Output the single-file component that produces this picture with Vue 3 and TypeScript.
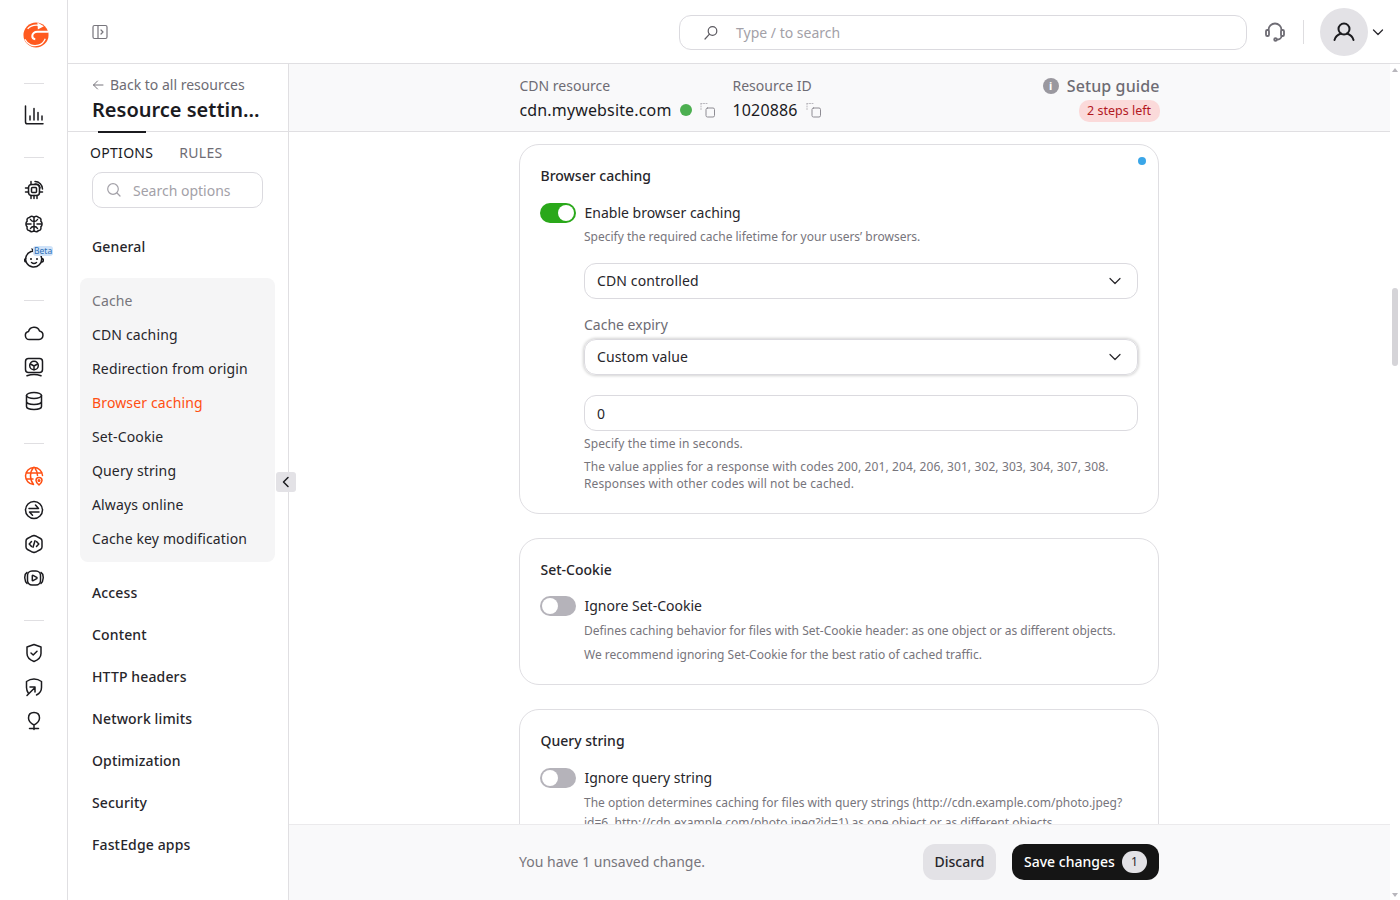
<script setup lang="ts">
const cacheItems = ['CDN caching', 'Redirection from origin', 'Browser caching', 'Set-Cookie', 'Query string', 'Always online', 'Cache key modification']
const groups = ['Access', 'Content', 'HTTP headers', 'Network limits', 'Optimization', 'Security', 'FastEdge apps']
</script>

<template>
  <div class="page">
    <aside class="rail">
      <svg class="logo" viewBox="0 0 28 28" width="26" height="26">
        <circle cx="14" cy="14" r="13.500" fill="#ff5a1f" />
        <path class="lw" d="M27.500 10.500H15.500c-3.200 0-5.500 2-5.500 4.500 0 2 1.300 3.300 3.200 3.500" />
        <path class="lw thin" d="M5 7.500C8 3.800 12 3 16.500 3.500" />
        <path class="lfill" d="M15.500 .5 22.500 4.500 16 8z" />
        <path class="lw thin" d="M2 18.500C5 24.500 11 26.500 16.500 25c3.500-1 6-3.500 7.500-7" />
      </svg>
      <div class="sep first"></div>
      <div class="rail-group single">
        <svg class="ri" viewBox="0 0 20 20"><path d="M1.500 1v16q0 1.800 1.800 1.800H19M6 15v-4M10 15V3.500M14 15V7.500M18 15v-4" /></svg>
      </div>
      <div class="sep"></div>
      <div class="rail-group">
        <svg class="ri" viewBox="0 0 20 20"><rect x="4.500" y="4.500" width="11" height="11" rx="3" /><rect x="7.500" y="7.500" width="5" height="5" rx="1" /><path d="M1.500 8h3M1.500 12h3M15.500 12h3M7 15.500v3M10 15.500v3M13 15.500v3M7 1.500v3M11 1.500a7.500 7.500 0 0 1 7.500 7.500M11 4a5 5 0 0 1 5 4" /></svg>
        <svg class="ri" viewBox="0 0 20 20"><path d="M10 3.500C9 2 6.500 1.800 5.500 3.500 3.500 3.500 2.500 5.500 3.200 7.200c-1.700 1.300-1.700 4.300 0 5.600-.7 1.700.3 3.700 2.300 3.700 1 1.700 3.500 1.500 4.500 0 1 1.500 3.500 1.700 4.500 0 2 0 3-2 2.300-3.700 1.700-1.300 1.700-4.300 0-5.600.7-1.700-.3-3.700-2.300-3.700C13.500 1.800 11 2 10 3.500zM10 3.500v13M10 7.500C8 7.500 7 6.500 6.500 5.500M10 12.500c-2 0-3 1-3.500 2M3.200 10H7M10 7.500c2 0 3-1 3.500-2M10 12.500c2 0 3 1 3.500 2M16.800 10H13" /></svg>
        <div class="beta-wrap">
          <svg class="ri" viewBox="0 0 20 20"><path d="M7 3.500a8 8 0 1 0 7 .8M2 10.500a1.800 1.800 0 0 0 0 3.500M18 10.500a1.800 1.800 0 0 1 0 3.500M7 3.500c2 .2 2.500-1.500 1-2.500" /><circle cx="7" cy="11" r="1" class="fill" /><circle cx="13" cy="11" r="1" class="fill" /><path d="M7.500 14.500q2.500 2 5 0" /></svg>
          <span class="beta">Beta</span>
        </div>
      </div>
      <div class="sep"></div>
      <div class="rail-group">
        <svg class="ri" viewBox="0 0 20 20"><path d="M5.500 16.500a4 4 0 0 1-1-7.900 5.800 5.800 0 0 1 11-.6 4.300 4.300 0 0 1-.5 8.500z" /></svg>
        <svg class="ri" viewBox="0 0 20 20"><rect x="1.500" y="1.500" width="17" height="14" rx="3" /><circle cx="10" cy="8.500" r="4.300" /><path d="M6.500 7 10 9l3.500-2M10 9v3.800M3 18.800q7-2.600 14 0" /></svg>
        <svg class="ri" viewBox="0 0 20 20"><ellipse cx="10" cy="4.500" rx="7.500" ry="3" /><path d="M2.500 4.500v11c0 1.700 3.400 3 7.500 3s7.500-1.300 7.500-3v-11M2.500 10.500c0 1.700 3.400 3 7.500 3s7.500-1.300 7.500-3" /></svg>
      </div>
      <div class="sep"></div>
      <div class="rail-group">
        <svg class="ri orange" viewBox="0 0 20 20"><path d="M9.500 18.500A8.500 8.500 0 1 1 18.500 9.500M2 7h16M2 13h7M9.500 1.500c-4 4.500-4 12 0 17M10.500 1.500c2 2.500 3 5 3 8" /><path d="M15 11.500a3 3 0 0 1 3 3c0 2-3 4.500-3 4.500s-3-2.500-3-4.500a3 3 0 0 1 3-3z" /><circle cx="15" cy="14.500" r=".8" /></svg>
        <svg class="ri" viewBox="0 0 20 20"><circle cx="10" cy="10" r="8.500" /><path d="M5 8.500h9.500L11.500 5M15 12H5.500l3 3.300" /></svg>
        <svg class="ri" viewBox="0 0 20 20"><path d="M7.500 2.300 10 1.500l2.500.8 4 2.200q1.500.8 1.500 2.500v6q0 1.700-1.500 2.500l-4 2.200-2.500.8-2.500-.8-4-2.200Q2 14.700 2 13V7q0-1.700 1.500-2.500zM7.500 7.500 5.200 10l2.300 2.500M12.500 7.500l2.300 2.500-2.300 2.500M11 6.800 9 13.200" /></svg>
        <svg class="ri" viewBox="0 0 20 20"><rect x="3.500" y="3" width="13" height="14" rx="4.500" /><path d="M3 4.500Q.5 6 .8 10T3 15.500M17 4.500q2.500 1.500 2.200 5.500T17 15.500M8.300 7.800q0-.8.8-.4l3.600 2q.6.6 0 1.200l-3.600 2q-.8.4-.8-.4z" /></svg>
      </div>
      <div class="sep"></div>
      <div class="rail-group">
        <svg class="ri" viewBox="0 0 20 20"><path d="M10 1.500 17 4v6.500c0 3.800-3.200 6.500-7 8-3.800-1.500-7-4.200-7-8V4zM7 10l2.200 2L13 8.200" /></svg>
        <svg class="ri" viewBox="0 0 20 20"><path d="M4.500 16.500Q2.500 13.500 2.500 10.500V4.500Q6 2 10 2t7.500 2.500v6c0 3.500-2 6-5 7.500M3 18.500l8-8M6 10h5v5" /></svg>
        <svg class="ri" viewBox="0 0 20 20"><path d="M10 1.500c-3.500 0-5.500 2.300-5.500 5.500 0 3.300 2.500 5.500 5.500 7 3-1.500 5.500-3.700 5.500-7 0-3.200-2-5.500-5.500-5.500zM10 14v4.500M5.500 17.500h9" /></svg>
      </div>
    </aside>

    <div class="right">
      <header class="topbar">
        <svg class="panel-ico" viewBox="0 0 16 16" width="16" height="16"><rect x="1" y="1.500" width="14" height="13" rx="1.500" /><path d="M6 1.500v13M9 6l2 2-2 2" /></svg>
        <div class="global-search">
          <svg viewBox="0 0 16 16" width="16" height="16"><circle cx="9.500" cy="6" r="4.300" /><path d="M6.500 9.200 2 14" /></svg>
          <span>Type / to search</span>
        </div>
        <svg class="headset" viewBox="0 0 22 22" width="22" height="22"><path d="M4.500 9a6.500 6.500 0 0 1 13 0M17.500 15c0 2-2 3.500-4.500 3.500" /><rect x="2" y="9" width="3" height="6" rx="1.300" /><rect x="17" y="9" width="3" height="6" rx="1.300" /><circle cx="11.500" cy="18.500" r="1.300" /></svg>
        <div class="vline"></div>
        <div class="avatar">
          <svg viewBox="0 0 24 24" width="24" height="24"><circle cx="12" cy="9" r="5.500" /><path d="M2.500 20c.8-3 3.500-5.500 6.500-6.500M21.500 20c-.8-3-3.500-5.500-6.500-6.500" /></svg>
        </div>
        <svg class="caret" viewBox="0 0 12 12" width="12" height="12"><path d="m1.500 4 4.500 4.500L10.500 4" /></svg>
      </header>

      <div class="body">
        <nav class="side">
          <div class="side-head">
            <div class="back"><svg viewBox="0 0 12 12" width="12" height="12"><path d="M11 6H1.500M5.500 2 1.500 6l4 4" /></svg>Back to all resources</div>
            <h1>Resource settin...</h1>
            <i class="tab-line"></i>
          </div>
          <div class="tabs"><span class="on">OPTIONS</span><span>RULES</span></div>
          <div class="opt-search">
            <svg viewBox="0 0 16 16" width="16" height="16"><circle cx="7" cy="7" r="5.300" /><path d="m11 11 3 3" /></svg>
            <span>Search options</span>
          </div>
          <div class="nav-item general">General</div>
          <div class="cache-box">
            <div class="cache-title">Cache</div>
            <div v-for="c in cacheItems" :key="c" class="cache-item" :class="{ active: c === 'Browser caching' }">{{ c }}</div>
          </div>
          <div class="nav-list">
            <div v-for="g in groups" :key="g" class="nav-item">{{ g }}</div>
          </div>
          <button class="collapse" type="button"><svg viewBox="0 0 12 12" width="12" height="12"><path d="M8 1.500 3.500 6 8 10.500" /></svg></button>
        </nav>

        <main class="main">
          <div class="res-head">
            <div class="res-inner">
              <div class="res-col">
                <div class="res-label">CDN resource</div>
                <div class="res-value">cdn.mywebsite.com<i class="dot"></i>
                  <svg class="copy" viewBox="0 0 16 16" width="16" height="16"><rect x="6" y="6" width="8.500" height="9" rx="1.500" /><path class="dash" d="M1 1.500h6M1 1.500v6" /></svg>
                </div>
              </div>
              <div class="res-col">
                <div class="res-label">Resource ID</div>
                <div class="res-value">1020886
                  <svg class="copy" viewBox="0 0 16 16" width="16" height="16"><rect x="6" y="6" width="8.500" height="9" rx="1.500" /><path class="dash" d="M1 1.500h6M1 1.500v6" /></svg>
                </div>
              </div>
              <div class="guide">
                <div class="guide-title"><i class="info">i</i>Setup guide</div>
                <span class="steps">2 steps left</span>
              </div>
            </div>
          </div>

          <div class="scroll">
            <section class="card first-card">
              <i class="blue-dot"></i>
              <h2>Browser caching</h2>
              <div class="switch-row r1">
                <span class="switch on"><i></i></span>
                <span class="switch-label">Enable browser caching</span>
              </div>
              <div class="indent">
                <p class="hint h1">Specify the required cache lifetime for your users’ browsers.</p>
                <div class="select s1"><span class="sel-text">CDN controlled</span><svg viewBox="0 0 12 12" width="12" height="12"><path d="m1 3.500 5 5 5-5" /></svg></div>
                <div class="field-label">Cache expiry</div>
                <div class="select focus"><span class="sel-text">Custom value</span><svg viewBox="0 0 12 12" width="12" height="12"><path d="m1 3.500 5 5 5-5" /></svg></div>
                <div class="select input">0</div>
                <p class="hint h2">Specify the time in seconds.</p>
                <p class="hint h3">The value applies for a response with codes 200, 201, 204, 206, 301, 302, 303, 304, 307, 308.<br />Responses with other codes will not be cached.</p>
              </div>
            </section>

            <section class="card second-card">
              <h2>Set-Cookie</h2>
              <div class="switch-row r2">
                <span class="switch"><i></i></span>
                <span class="switch-label">Ignore Set-Cookie</span>
              </div>
              <div class="indent">
                <p class="hint h4">Defines caching behavior for files with Set-Cookie header: as one object or as different objects.</p>
                <p class="hint h5">We recommend ignoring Set-Cookie for the best ratio of cached traffic.</p>
              </div>
            </section>

            <section class="card third-card">
              <h2>Query string</h2>
              <div class="switch-row r3">
                <span class="switch"><i></i></span>
                <span class="switch-label">Ignore query string</span>
              </div>
              <div class="indent">
                <p class="hint h4 wrap">The option determines caching for files with query strings (http://cdn.example.com/photo.jpeg?id=6, http://cdn.example.com/photo.jpeg?id=1) as one object or as different objects.</p>
              </div>
            </section>
          </div>

          <footer class="savebar">
            <div class="save-inner">
              <span class="unsaved">You have 1 unsaved change.</span>
              <button class="discard" type="button">Discard</button>
              <button class="save" type="button"><span class="save-text">Save changes</span><b>1</b></button>
            </div>
          </footer>
        </main>

        <div class="sbar">
          <i class="arrow up"></i>
          <i class="thumb"></i>
          <i class="arrow down"></i>
        </div>
      </div>
    </div>
  </div>
</template>

<style>
html, body { margin: 0; background: #fff; overflow: hidden; }
</style>

<style scoped>
.page { display: flex; width: 1400px; height: 900px; overflow: hidden; font-family: "Noto Sans", sans-serif; color: #1b1b1f; font-size: 14px; }
svg { fill: none; stroke: currentColor; stroke-linecap: round; stroke-linejoin: round; }
.rail { flex: none; width: 66px; padding-left: 1px; border-right: 1px solid #e0dfe2; display: flex; flex-direction: column; align-items: center; }
.logo { margin-top: 22px; align-self: flex-start; margin-left: 22px; flex: none; stroke: none; }
.logo circle { stroke: none; }
.lw { stroke: #fff; stroke-width: 2.200; stroke-linecap: butt; fill: none; }
.lw.thin { stroke-width: 1.400; }
.lfill { fill: #fff; stroke: none; }
.sep { width: 20px; height: 1px; background: #e0dfe2; margin-top: 32px; flex: none; }
.sep.first { margin-top: 35px; }
.rail-group { display: flex; flex-direction: column; align-items: center; gap: 14px; margin-top: 22px; }
.rail-group.single { margin-top: 21px; }
.ri { width: 20px; height: 20px; stroke-width: 1.500; color: #1b1b1f; display: block; }
.ri.orange { color: #ff4f12; }
.fill { fill: currentColor; stroke: none; }
.beta-wrap { position: relative; width: 20px; height: 20px; }
.beta { position: absolute; left: 9px; top: -2px; font-size: 8.500px; line-height: 10px; padding: 0 1px; background: #cfe2f8; color: #2d6fb5; border-radius: 3px; }
.right { flex: 1; min-width: 0; display: flex; flex-direction: column; }
.topbar { height: 63px; flex: none; border-bottom: 1px solid #e0dfe2; display: flex; align-items: center; padding-left: 24px; color: #6e6c74; }
.panel-ico { stroke: #77757c; stroke-width: 1.200; margin-right: 571px; flex: none; }
.global-search { width: 566px; height: 33px; margin-top: 2px; border: 1px solid #dbdadf; border-radius: 12px; display: flex; align-items: center; color: #a3a1a8; flex: none; }
.global-search svg { margin-left: 23px; margin-right: 17px; stroke: #5c5a61; stroke-width: 1.200; }
.headset { margin-left: 17px; stroke: #6e6c74; stroke-width: 1.800; flex: none; }
.vline { width: 1px; height: 24px; background: #dedde0; margin: 0 16px 0 17px; flex: none; }
.avatar { width: 48px; height: 48px; border-radius: 50%; background: #e3e2e6; display: flex; align-items: center; justify-content: center; flex: none; color: #1b1b1f; }
.avatar svg { stroke-width: 2; }
.caret { margin-left: 4px; stroke: #2b2a2f; stroke-width: 1.300; flex: none; }
.body { flex: 1; min-height: 0; display: flex; position: relative; }
.side { width: 220px; flex: none; border-right: 1px solid #e0dfe2; position: relative; }
.side-head { height: 67px; border-bottom: 1px solid #e0dfe2; position: relative; padding-left: 24px; }
.back { color: #6e6c74; line-height: 20px; padding-top: 11px; display: flex; align-items: center; gap: 6px; }
.back svg { stroke: #77757c; stroke-width: 1; }
h1 { margin: 2px 0 0; font-size: 20px; line-height: 26px; font-weight: 600; color: #1b1b1f; }
.tab-line { position: absolute; left: 30px; bottom: -2px; width: 48px; height: 2px; background: #1b1b1f; }
.tabs { display: flex; gap: 26px; padding: 11px 0 0 22px; line-height: 20px; color: #6e6c74; letter-spacing: .3px; }
.tabs .on { color: #1b1b1f; }
.opt-search { margin: 9px 0 0 24px; width: 169px; height: 34px; border: 1px solid #dbdadf; border-radius: 10px; display: flex; align-items: center; color: #a3a1a8; }
.opt-search svg { margin-left: 13px; margin-right: 11px; stroke: #a3a1a8; stroke-width: 1.200; }
.nav-item { padding-left: 24px; height: 42px; line-height: 42px; font-weight: 500; color: #27262b; letter-spacing: .14px; }
.general { margin-top: 18px; }
.cache-box { margin: 10px 13px 0 12px; background: #f5f5f6; border-radius: 8px; padding: 6px 0; }
.cache-title { height: 34px; line-height: 34px; padding-left: 12px; color: #77757c; letter-spacing: .1px; }
.cache-item { height: 34px; line-height: 34px; padding-left: 12px; color: #27262b; letter-spacing: .14px; }
.cache-item.active { color: #ff4f12; }
.nav-list { margin-top: 10px; }
.collapse { position: absolute; right: -8px; top: 408px; width: 20px; height: 20px; padding: 0; border: 0; border-radius: 3px; background: #e3e2e6; display: flex; align-items: center; justify-content: center; color: #1b1b1f; z-index: 2; }
.collapse svg { stroke-width: 1.500; }
.main { flex: 1; min-width: 0; display: flex; flex-direction: column; }
.res-head { height: 67px; flex: none; border-bottom: 1px solid #e0dfe2; background: #f9f9fa; }
.res-inner { width: 640px; margin: 0 auto; display: flex; padding-top: 12px; }
.res-col { margin-right: 17px; }
.res-label { color: #6e6c74; line-height: 20px; }
.res-value { font-size: 16px; letter-spacing: .15px; line-height: 26px; margin-top: 1px; display: flex; align-items: center; color: #1b1b1f; }
.dot { width: 12px; height: 12px; border-radius: 50%; background: #4caf50; margin-left: 8px; }
.copy { margin-left: 8px; stroke: #8e8c93; stroke-width: 1; }
.dash { stroke: #b8b6bc; stroke-dasharray: 1 1.500; }
.guide { margin-left: auto; margin-top: -1px; display: flex; flex-direction: column; align-items: flex-end; }
.guide-title { display: flex; align-items: center; gap: 8px; font-size: 16px; letter-spacing: .1px; font-weight: 500; color: #6e6c74; line-height: 22px; }
.info { width: 16px; height: 16px; border-radius: 50%; background: #9a989f; color: #fff; font-size: 11px; font-style: normal; font-weight: 700; text-align: center; line-height: 16px; }
.steps { margin-top: 3px; height: 22px; line-height: 22px; padding: 0 8.500px; border-radius: 10px; background: #fbdada; color: #b3191f; font-size: 12.500px; }
.scroll { flex: 1; min-height: 0; overflow: hidden; padding: 12px 1px 0 0; }
.card { width: 598px; margin: 0 auto 24px; border: 1px solid #dfdee2; border-radius: 20px; padding: 0 20px; position: relative; background: #fff; }
.first-card { height: 368px; }
.second-card { height: 145px; }
.third-card { height: 300px; }
.blue-dot { position: absolute; top: 12px; right: 12px; width: 8px; height: 8px; border-radius: 50%; background: #3aa6e8; }
h2 { margin: 0 0 0 .5px; padding-top: 21px; font-size: 14px; line-height: 20px; font-weight: 500; color: #27262b; }
.switch-row { display: flex; align-items: center; gap: 8px; height: 20px; }
.r1 { margin-top: 17px; }
.r2 { margin-top: 16px; }
.r3 { margin-top: 17px; }
.switch { width: 36px; height: 20px; border-radius: 10px; background: #b5b3ba; position: relative; flex: none; }
.switch i { position: absolute; left: 2px; top: 2px; width: 16px; height: 16px; border-radius: 50%; background: #fff; }
.switch.on { background: #2aa81a; }
.switch.on i { left: 18px; }
.switch-label { color: #27262b; line-height: 20px; margin-left: .5px; }
.indent { margin-left: 44px; }
.hint { margin: 0; font-size: 12px; line-height: 20px; color: #77757c; }
.h1 { margin-top: 4px; }
.select { height: 34px; margin-top: 16px; border: 1px solid #dbdadf; border-radius: 12px; display: flex; align-items: center; justify-content: space-between; padding: 0 16px 0 12px; color: #27262b; letter-spacing: .12px; }
.select svg { stroke: #27262b; stroke-width: 1.200; }
.sel-text { margin-bottom: 2px; }
.field-label { color: #6e6c74; line-height: 20px; margin-top: 16px; }
.select.focus { margin-top: 4px; box-shadow: 0 0 3px 1px rgba(0, 0, 0, .18); }
.select.input { margin-top: 20px; }
.h2 { margin-top: 3px; letter-spacing: .1px; }
.h3 { margin-top: 4px; line-height: 17px; letter-spacing: .11px; }
.h4 { margin-top: 5px; }
.h5 { margin-top: 4px; }
.wrap { width: 546px; }
.savebar { height: 75px; flex: none; border-top: 1px solid #ebeaec; background: #f9f9fa; padding-right: 1px; }
.save-inner { width: 640px; margin: 0 auto; height: 74px; display: flex; align-items: center; }
.unsaved { color: #77757c; margin-right: auto; margin-bottom: 2px; }
.discard { height: 36px; width: 73px; border: 0; border-radius: 12px; background: #e3e2e6; color: #27262b; font: 500 14px "Noto Sans", sans-serif; padding: 0 0 2px; margin-right: 16px; }
.save { height: 36px; width: 147px; border: 0; border-radius: 12px; background: #151515; color: #fff; font: 500 14px "Noto Sans", sans-serif; padding: 0 12px; display: flex; align-items: center; justify-content: space-between; }
.save-text { margin-bottom: 2px; }
.save b { width: 25px; height: 22px; border-radius: 11px; background: #e3e2e6; color: #27262b; font-size: 12px; font-weight: 400; text-align: center; line-height: 22px; }
.sbar { width: 10px; flex: none; position: relative; background: #fff; }
.thumb { position: absolute; left: 2px; top: 224px; width: 6px; height: 78px; background: #d5d4d8; border-radius: 3px; }
.arrow { position: absolute; left: 2px; width: 0; height: 0; border-left: 3px solid transparent; border-right: 3px solid transparent; }
.up { top: 4px; border-bottom: 4px solid #b8b6bc; }
.down { bottom: 3px; border-top: 4px solid #b8b6bc; }
</style>
